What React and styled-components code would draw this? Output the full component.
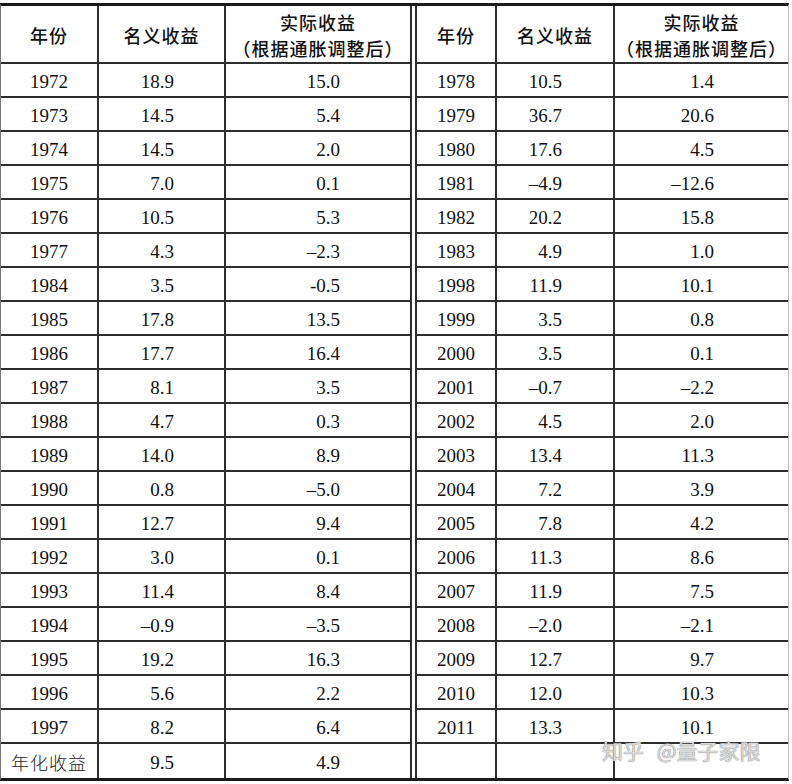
import React from "react";
import styled, { createGlobalStyle } from "styled-components";

const Global = createGlobalStyle`
  html, body { margin: 0; padding: 0; background: #fff; }
  body { font-family: "Liberation Serif", "Noto Sans CJK SC", serif; color: #111; }
`;

const Page = styled.div`
  position: relative;
  width: 792px;
  height: 784px;
  padding-top: 3px;
  box-sizing: border-box;
`;

const Table = styled.div`
  display: grid;
  grid-template-columns: 98px 127px 186px 5px 80px 118px 173px;
  grid-template-rows: 58px repeat(21, 34px);
  width: 787px;
  border-top: 3px solid #1a1a1a;
  border-bottom: 3px solid #1a1a1a;
  border-left: 1px solid #777;
  border-right: 1px solid #bbb;
`;

const Cell = styled.div`
  display: flex;
  align-items: center;
  justify-content: ${(p) => (p.$align === "right" ? "flex-end" : "center")};
  padding-right: ${(p) => (p.$pad ? `${p.$pad}px` : "0")};
  padding-top: 4px;
  box-sizing: border-box;
  border-right: ${(p) => (p.$noRight ? "none" : "2px solid #2e2e2e")};
  border-bottom: ${(p) => (p.$last ? "none" : "2px solid #2e2e2e")};
  font-family: "Liberation Serif", "Noto Sans CJK SC", serif;
  font-size: 19px;
  line-height: 20px;
  color: #111;
  white-space: nowrap;
`;

const HeadCell = styled(Cell)`
  flex-direction: column;
  font-family: "Noto Sans CJK SC", sans-serif;
  font-weight: 500;
  font-size: 18px;
  letter-spacing: 1px;
  line-height: 26px;
  padding-top: 2px;
  color: #111;
`;

const Label = styled.span`
  font-family: "Noto Sans CJK SC", sans-serif;
  font-weight: 300;
  font-size: 18px;
  letter-spacing: 1px;
  color: #222;
  margin-top: -3px;
`;

const Spacer = styled.div`
  border-right: 2px solid #2e2e2e;
`;

const Watermark = styled.div`
  position: absolute;
  left: 602px;
  top: 741px;
  font-family: "Noto Sans CJK SC", sans-serif;
  font-size: 21px;
  line-height: 19px;
  font-weight: 400;
  color: rgba(235, 235, 235, 0.85);
  text-shadow: 0 0 1px #777, 0 0 1px #999;
  white-space: nowrap;
  word-spacing: 8px;
  pointer-events: none;
`;

const left = [
  ["1972", "18.9", "15.0"],
  ["1973", "14.5", "5.4"],
  ["1974", "14.5", "2.0"],
  ["1975", "7.0", "0.1"],
  ["1976", "10.5", "5.3"],
  ["1977", "4.3", "–2.3"],
  ["1984", "3.5", "-0.5"],
  ["1985", "17.8", "13.5"],
  ["1986", "17.7", "16.4"],
  ["1987", "8.1", "3.5"],
  ["1988", "4.7", "0.3"],
  ["1989", "14.0", "8.9"],
  ["1990", "0.8", "–5.0"],
  ["1991", "12.7", "9.4"],
  ["1992", "3.0", "0.1"],
  ["1993", "11.4", "8.4"],
  ["1994", "–0.9", "–3.5"],
  ["1995", "19.2", "16.3"],
  ["1996", "5.6", "2.2"],
  ["1997", "8.2", "6.4"],
  ["年化收益", "9.5", "4.9"],
];

const right = [
  ["1978", "10.5", "1.4"],
  ["1979", "36.7", "20.6"],
  ["1980", "17.6", "4.5"],
  ["1981", "–4.9", "–12.6"],
  ["1982", "20.2", "15.8"],
  ["1983", "4.9", "1.0"],
  ["1998", "11.9", "10.1"],
  ["1999", "3.5", "0.8"],
  ["2000", "3.5", "0.1"],
  ["2001", "–0.7", "–2.2"],
  ["2002", "4.5", "2.0"],
  ["2003", "13.4", "11.3"],
  ["2004", "7.2", "3.9"],
  ["2005", "7.8", "4.2"],
  ["2006", "11.3", "8.6"],
  ["2007", "11.9", "7.5"],
  ["2008", "–2.0", "–2.1"],
  ["2009", "12.7", "9.7"],
  ["2010", "12.0", "10.3"],
  ["2011", "13.3", "10.1"],
  ["", "", ""],
];

function Header({ last }) {
  return (
    <>
      <HeadCell>年份</HeadCell>
      <HeadCell>名义收益</HeadCell>
      <HeadCell $noRight={last}>
        <span>实际收益</span>
        <span>（根据通胀调整后）</span>
      </HeadCell>
    </>
  );
}

export default function App() {
  return (
    <>
      <Global />
      <Page>
        <Table>
          <Header />
          <Spacer />
          <Header last />
          {left.map((l, i) => {
            const r = right[i];
            const isLast = i === left.length - 1;
            return (
              <React.Fragment key={i}>
                <Cell $last={isLast}>
                  {l[0] === "年化收益" ? <Label>{l[0]}</Label> : l[0]}
                </Cell>
                <Cell $last={isLast} $align="right" $pad={50}>{l[1]}</Cell>
                <Cell $last={isLast} $align="right" $pad={70}>{l[2]}</Cell>
                <Spacer />
                <Cell $last={isLast}>{r[0]}</Cell>
                <Cell $last={isLast} $align="right" $pad={51}>{r[1]}</Cell>
                <Cell $last={isLast} $align="right" $pad={74} $noRight>{r[2]}</Cell>
              </React.Fragment>
            );
          })}
        </Table>
        <Watermark>知乎 @量子家限</Watermark>
      </Page>
    </>
  );
}
